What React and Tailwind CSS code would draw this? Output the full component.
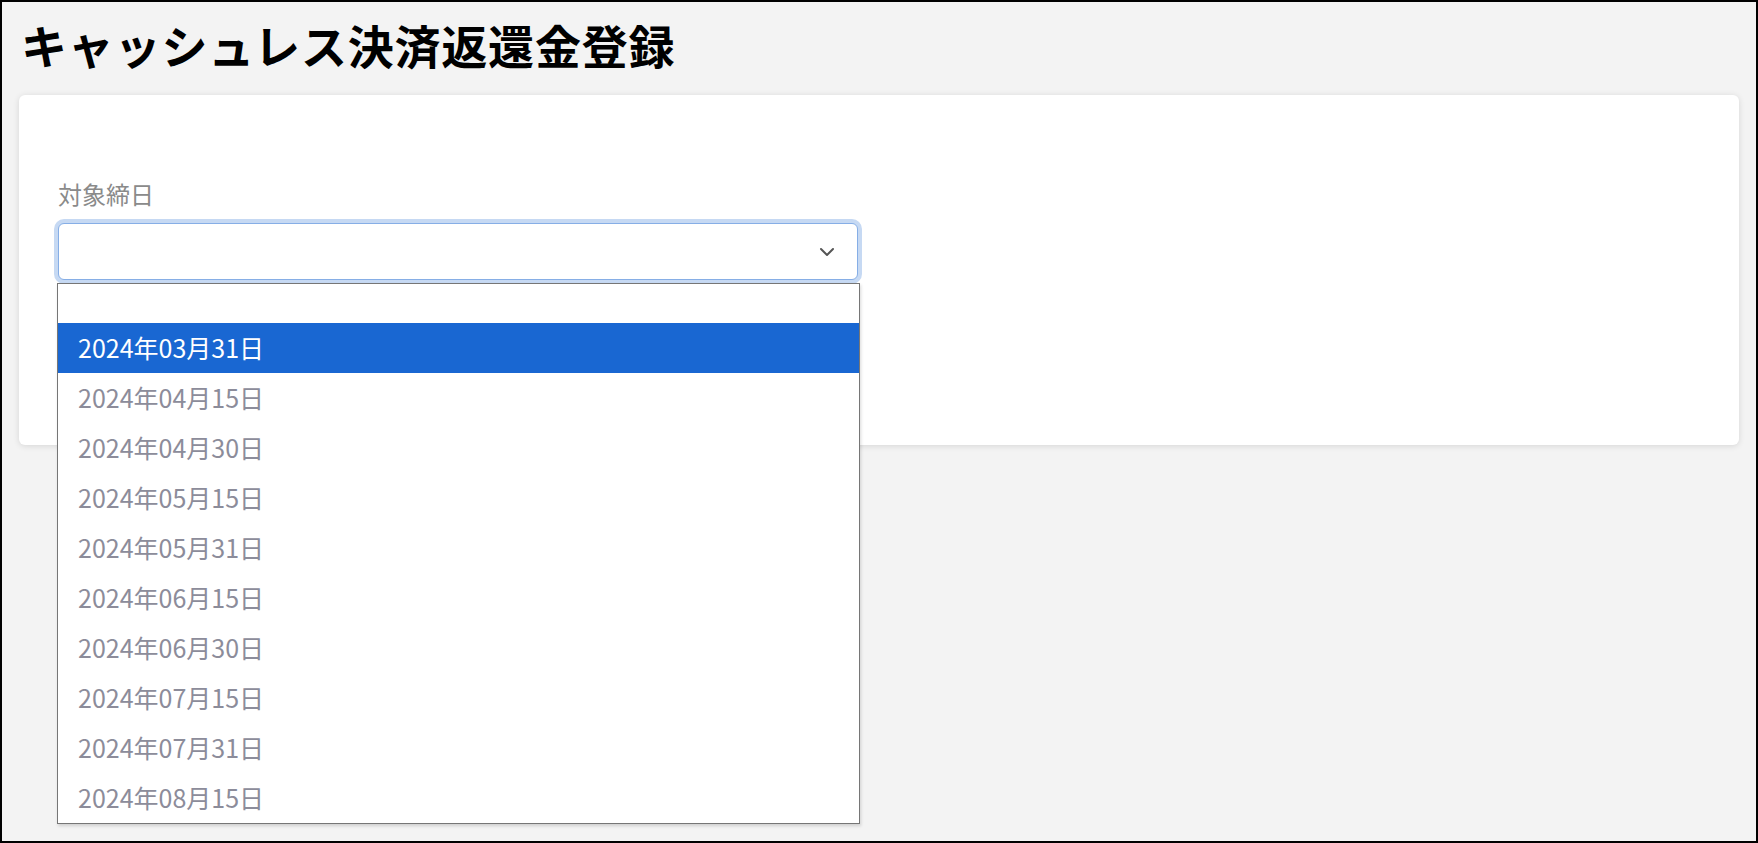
import React from 'react';
import { ChevronDown } from 'lucide-react';

const dates = [
  '2024年03月31日',
  '2024年04月15日',
  '2024年04月30日',
  '2024年05月15日',
  '2024年05月31日',
  '2024年06月15日',
  '2024年06月30日',
  '2024年07月15日',
  '2024年07月31日',
  '2024年08月15日',
];

const font = { fontFamily: '"Noto Sans CJK JP", "Noto Sans", sans-serif' };

const App = () => {
  const selected = dates[0];

  return (
    <div
      className="h-screen w-full border-2 border-black bg-[#f3f3f3] px-[17px] overflow-hidden"
      style={font}
    >
      <h1 className="pt-[12px] pl-[2px] text-[46px] font-bold leading-[60px] text-black tracking-[0.8px]">
        キャッシュレス決済返還金登録
      </h1>

      <div className="mt-[21px] h-[350px] rounded-[6px] bg-white shadow-[0_1px_6px_rgba(0,0,0,0.12)] pl-[39px] pt-[83px]">
        <label className="block text-[24px] leading-[32px] text-[#8a8a8a]">対象締日</label>

        <div className="relative mt-[13px] w-[800px]">
          <div className="flex h-[57px] items-center justify-end rounded-[6px] border border-[#86aee6] bg-white pr-[18px] shadow-[0_0_0_4px_#c6d9f3]">
            <ChevronDown size={24} strokeWidth={2} className="text-[#555]" />
          </div>

          {/* open option list */}
          <div className="absolute left-[-1px] top-[60px] z-10 w-[803px] border border-[#767676] bg-white shadow-[1px_2px_3px_rgba(0,0,0,0.15)]">
            <div className="h-[39px]" />
            {dates.map((d) => (
              <div
                key={d}
                className={
                  d === selected
                    ? 'flex h-[50px] items-center bg-[#1967d2] pl-[20px] text-[25px] text-white'
                    : 'flex h-[50px] items-center pl-[20px] text-[25px] text-[#8c8c9a]'
                }
              >
                {d}
              </div>
            ))}
          </div>
        </div>
      </div>
    </div>
  );
};

export default App;
